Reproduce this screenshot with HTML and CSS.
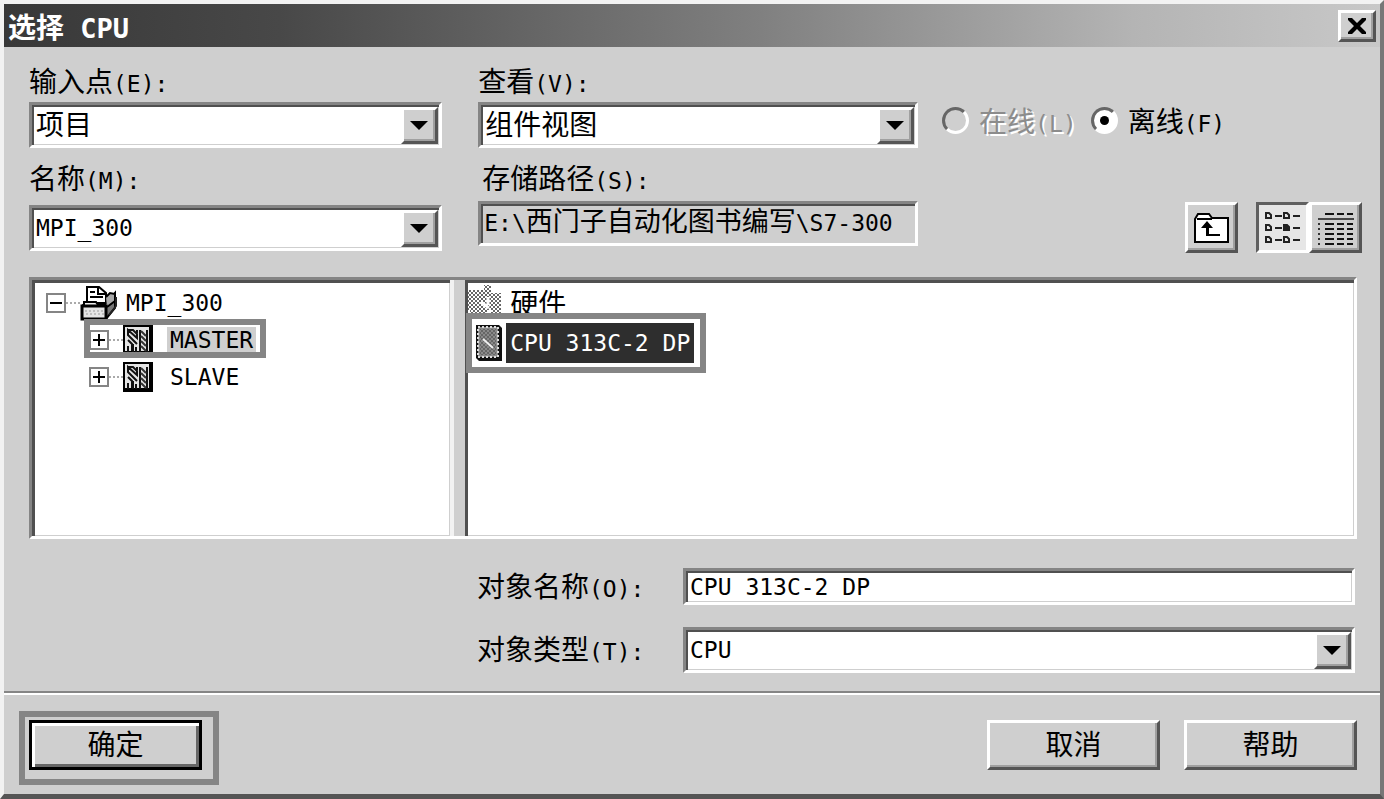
FILE: index.html
```html
<!DOCTYPE html>
<html lang="zh-CN">
<head>
    <meta charset="UTF-8">
    <meta name="viewport" content="width=device-width, initial-scale=1.0">
    <title>选择 CPU</title>
    <link rel="stylesheet" href="styles.css">
</head>
<body>

    <div class="dialog">
        <div class="titlebar">
            <h1>选择<span class="en"> CPU</span></h1>
            <button class="close-btn" type="button" aria-label="关闭">
                <svg width="20" height="18" viewBox="0 0 20 18"><path d="M1 1h4l5 5 5-5h4v2l-6 6 6 6v2h-4l-5-5-5 5H1v-2l6-6-6-6z"/></svg>
            </button>
        </div>

        <div class="top">
            <div class="col-entry">
                <label for="entry">输入点<span class="en">(E):</span></label>
                <div class="combo">
                    <select id="entry"><option>项目</option></select>
                    <span class="arrow"></span>
                </div>
                <label class="second" for="name">名称<span class="en">(M):</span></label>
                <div class="combo combo-name">
                    <select id="name" class="en"><option>MPI_300</option></select>
                    <span class="arrow"></span>
                </div>
            </div>

            <div class="col-view">
                <label for="view">查看<span class="en">(V):</span></label>
                <div class="combo">
                    <select id="view"><option>组件视图</option></select>
                    <span class="arrow"></span>
                </div>
                <label class="second indent" for="path">存储路径<span class="en">(S):</span></label>
                <output id="path" class="path"><span class="en">E:\</span>西门子自动化图书编写<span class="en">\S7-300</span></output>
            </div>

            <div class="col-mode">
                <div class="radios">
                    <input type="radio" name="mode" id="online" disabled>
                    <label for="online">在线<span class="en">(L)</span></label>
                    <input type="radio" name="mode" id="offline" checked>
                    <label for="offline">离线<span class="en">(F)</span></label>
                </div>
                <div class="toolbar">
                    <button type="button" class="tool tool-up" aria-label="上一级">
                        <svg width="36" height="32" viewBox="0 0 36 32">
                            <path d="M1 30V7l3-5h11l3 4h16v24z" fill="#fff" stroke="#000" stroke-width="2"/>
                            <path d="M3 7h15" stroke="#000" stroke-width="2"/>
                            <path d="M7 16l6-7 6 7h-4v6h11v2H12v-8z" fill="#000"/>
                        </svg>
                    </button>
                    <button type="button" class="tool pressed" aria-label="列表">
                        <svg width="36" height="32" viewBox="0 0 36 32">
                            <defs>
                                <g id="item">
                                    <path d="M1 1h3l2 2v3H1z" fill="none" stroke="#222" stroke-width="2"/>
                                    <path d="M10 4h7" stroke="#222" stroke-width="2"/>
                                </g>
                            </defs>
                            <use href="#item" x="0" y="0"/><use href="#item" x="18" y="0"/>
                            <use href="#item" x="0" y="12"/><use href="#item" x="18" y="12"/>
                            <use href="#item" x="0" y="24"/><use href="#item" x="18" y="24"/>
                            <path d="M19 13h4v5h-4z" fill="#222"/>
                        </svg>
                    </button>
                    <button type="button" class="tool" aria-label="详细资料">
                        <svg width="38" height="34" viewBox="0 0 38 34">
                            <path d="M1 8h36" stroke="#444" stroke-width="2"/>
                            <path d="M8 3h9m3 0h7m3 0h6M8 13h9m3 0h7m3 0h6M8 18h9m3 0h7m3 0h6M8 23h9m3 0h7m3 0h6M8 28h9m3 0h7m3 0h6M8 33h9m3 0h7m3 0h6" stroke="#111" stroke-width="2"/>
                            <path d="M2 12v22" stroke="#333" stroke-width="2" stroke-dasharray="2 3"/>
                        </svg>
                    </button>
                </div>
            </div>
        </div>

        <div class="panes">
            <ul class="tree en">
                <li>
                    <div class="node">
                        <svg class="toggle" width="20" height="20" viewBox="0 0 20 20"><path d="M1 1h18v18H1z" class="box"/><path d="M4 10h12" class="sign"/></svg>
                        <span class="dots"></span>
                        <svg class="project" width="38" height="36" viewBox="0 0 38 36">
                            <path d="M3 20l5-4h20l7-8v15L26 34H3z" fill="#777" stroke="#000" stroke-width="2"/>
                            <path d="M7 17V2h12l7 6v10H7z" fill="#fff" stroke="#000" stroke-width="2"/>
                            <path d="M18 2v7h8M10 7h5M10 12h13" fill="none" stroke="#000" stroke-width="2"/>
                            <path d="M26 12l4-4 5 1v7l-8 6" fill="#aaa" stroke="#000" stroke-width="2"/>
                            <path d="M4 21v-4h12l2 3h8" fill="#eee" stroke="#000" stroke-width="2"/>
                            <path d="M2 21h24v13H2z" fill="#e4e4e4" stroke="#000" stroke-width="3"/>
                            <path d="M5 26h19M6 29h18" stroke="#999" stroke-dasharray="2 2"/>
                            <path d="M29 30l7-9v-9" fill="none" stroke="#222" stroke-width="2"/>
                        </svg>
                        <span class="caption">MPI_300</span>
                    </div>
                    <ul>
                        <li>
                            <div class="node mark mark-node">
                                <svg class="toggle" width="20" height="20" viewBox="0 0 20 20"><path d="M1 1h18v18H1z" class="box"/><path d="M4 10h12M10 4v12" class="sign"/></svg>
                                <span class="dots"></span>
                                <svg width="30" height="30" viewBox="0 0 30 30">
                                    <g id="station">
                                        <path d="M1 1h28v28H1z" fill="#e4e4e4" stroke="#000" stroke-width="2"/>
                                        <path d="M28 1v27H1" fill="none" stroke="#000" stroke-width="4"/>
                                        <path d="M5 5h5l4 4v4L5 5v5l9 9M5 15l4 4v7M5 21v6M14 5v3M13 22v5M10 19v8M17 5v22M24 5v22" fill="none" stroke="#111" stroke-width="2"/>
                                        <path d="M18 6l5 5M18 11l5 5M18 16l5 5M18 21l5 5" stroke="#333" stroke-width="2"/>
                                    </g>
                                </svg>
                                <span class="caption current">MASTER</span>
                            </div>
                        </li>
                        <li>
                            <div class="node">
                                <svg class="toggle" width="20" height="20" viewBox="0 0 20 20"><path d="M1 1h18v18H1z" class="box"/><path d="M4 10h12M10 4v12" class="sign"/></svg>
                                <span class="dots"></span>
                                <svg width="30" height="30" viewBox="0 0 30 30"><use href="#station"/></svg>
                                <span class="caption">SLAVE</span>
                            </div>
                        </li>
                    </ul>
                </li>
            </ul>
            <div class="splitter"></div>
            <ul class="list">
                <li>
                    <svg width="36" height="36" viewBox="0 0 36 36">
                        <defs>
                            <pattern id="dither" width="4" height="4" patternUnits="userSpaceOnUse"><path d="M0 0h2v2H0zM2 2h2v2H2z" fill="#666"/></pattern>
                        </defs>
                        <path d="M1 6h16V1h7v8h10v25h-4v-5h-6v-5l-5 5H3v-3H1z" fill="url(#dither)"/>
                        <path d="M14 18l8 6M21 13v8" stroke="#fff" stroke-width="3"/>
                    </svg>
                    <span class="item">硬件</span>
                </li>
                <li class="chosen mark mark-item">
                    <svg width="28" height="38" viewBox="0 0 28 38">
                        <path d="M1 1h23l3 3v33H4l-3-3z" fill="#111"/>
                        <path d="M3 3h20v30H3z" fill="#8a8a8a" stroke="#ddd" stroke-width="2" stroke-dasharray="2 2"/>
                        <path d="M5 5h16v26H5z" fill="url(#dither)"/>
                        <path d="M8 15l10 9" stroke="#eee" stroke-width="2"/>
                    </svg>
                    <span class="item en">CPU 313C-2 DP</span>
                </li>
            </ul>
        </div>

        <div class="fields">
            <label for="objName">对象名称<span class="en">(O):</span></label>
            <input id="objName" class="en" type="text" value="CPU 313C-2 DP">
            <label for="objType">对象类型<span class="en">(T):</span></label>
            <div class="combo">
                <select id="objType" class="en"><option>CPU</option></select>
                <span class="arrow"></span>
            </div>
        </div>

        <div class="footer">
            <div class="mark mark-ok"><button type="button" class="btn default">确定</button></div>
            <button type="button" class="btn cancel">取消</button>
            <button type="button" class="btn">帮助</button>
        </div>
    </div>

</body>
</html>
```

FILE: styles.css
```css
* { margin: 0; padding: 0; box-sizing: border-box; }
body { background: #cfcfcf; color: #000; font-family: "Noto Sans CJK SC", sans-serif; font-size: 28px; line-height: 36px; }
button, select, input { font: inherit; color: inherit; border-radius: 0; outline: none; }
ul { list-style: none; }
svg { display: block; flex: none; }
.en { font-family: "DejaVu Sans Mono", monospace; font-size: 23px; }

.dialog {
    min-height: 100vh; display: flex; flex-direction: column;
    border: 4px solid; border-color: #f2f2f2 #777 #555 #f2f2f2; border-bottom-width: 5px;
}

/* title bar */
.titlebar {
    height: 43px; padding: 0 4px; display: flex; align-items: center; justify-content: space-between;
    background: linear-gradient(to right, #383838, #484848 20%, #808080 55%, #b4b4b4 82%, #c8c8c8);
}
.titlebar h1 { color: #fff; font-size: 28px; line-height: 36px; white-space: pre; }
.titlebar .en { font-size: 27px; line-height: 1; }
.close-btn { width: 38px; height: 32px; display: flex; align-items: center; justify-content: center; }
.close-btn, .tool, .btn, .arrow {
    background: #cfcfcf; border: 3px solid; border-color: #fff #555 #555 #fff;
    box-shadow: inset -2px -2px #a0a0a0;
}

/* combos and fields */
.combo, .path, .fields input {
    display: block; width: 100%; background: #fff;
    border: 3px solid; border-color: #858585 #fff #fff #858585;
    box-shadow: inset 2px 2px #505050, inset -1px -1px #cfcfcf;
}
.combo { position: relative; height: 46px; }
.combo select {
    appearance: none; display: block; width: 100%; height: 40px; padding: 0 0 4px 4px;
    background: transparent; border: none;
}
.combo select.en { padding-bottom: 0; }
.arrow { position: absolute; top: 2px; right: 1px; width: 37px; height: 37px; pointer-events: none; }
.arrow::after {
    content: ""; position: absolute; top: 11px; left: 6px;
    border: 9px solid transparent; border-top-color: #000; border-bottom: none;
}

.top { display: flex; padding: 15px 18px 0 25px; }
label { display: block; height: 36px; white-space: nowrap; }
.col-entry { width: 31%; padding-bottom: 2px; }
.col-view { width: 33%; margin-left: 36px; }
.col-entry .combo, .col-view .combo { margin-top: 4px; }
.top .second { margin-top: 11px; }
.top .indent { padding-left: 4px; }
.col-entry .combo-name { margin-top: 10px; }
.path { height: 45px; margin-top: 6px; padding-left: 3px; background: #cfcfcf; font-size: 27px; line-height: 32px; white-space: nowrap; overflow: hidden; }

.col-mode { flex: 1; display: flex; flex-direction: column; justify-content: space-between; margin-left: 24px; }
.radios { display: flex; align-items: center; padding-top: 40px; }
.radios input {
    appearance: none; width: 27px; height: 27px; margin-right: 10px; flex: none;
    border: 3px solid; border-color: #666 #fff #fff #666; border-radius: 50%;
}
.radios label + input { margin-left: 14px; }
.radios input:checked { background: #fff; }
.radios input:checked::after { content: ""; display: block; width: 9px; height: 9px; margin: 6px; background: #000; border-radius: 50%; }
.radios input:disabled + label { color: #8c8c8c; text-shadow: 2px 2px #fff; }

.toolbar { display: flex; justify-content: flex-end; }
.tool { width: 53px; height: 51px; display: flex; align-items: center; justify-content: center; }
.tool-up { margin-right: 18px; }
.pressed { background: #e6e6e6; border-color: #606060 #fff #fff #606060; box-shadow: none; }

/* tree and list */
.panes {
    flex: 1; display: grid; grid-template-columns: 8fr 15px 17fr; min-height: 180px;
    margin: 24px 23px 0 25px; border: 3px solid; border-color: #858585 #fff #fff #858585;
}
.tree, .list { background: #fff; box-shadow: inset 3px 3px #505050, inset -1px -1px #cfcfcf; }
.tree { padding: 4px 0 0 14px; }
.tree ul { padding-left: 43px; }
.splitter { background: #cfcfcf; border-left: 4px solid #f2f2f2; }
.list { padding: 2px 0 0 2px; }
.node { display: flex; align-items: center; height: 37px; }
.box { fill: #fff; stroke: #858585; stroke-width: 2px; }
.sign { stroke: #000; stroke-width: 2px; }
.dots { width: 14px; border-top: 2px dotted #aaa; }
.node .caption { margin-left: 14px; padding: 0 3px; line-height: 26px; }
.node .project + .caption { margin-left: 5px; }
.node .current { background: #cfcfcf; }

.list li { display: flex; align-items: center; height: 39px; }
.list .item { margin-left: 3px; padding: 0 4px; }
.list .chosen { padding-left: 8px; height: 44px; }
.chosen .item { background: #2e2e2e; color: #fff; line-height: 40px; }

/* highlight frames */
.mark { position: relative; width: max-content; }
.mark::after { content: ""; position: absolute; border: 6px solid #858585; pointer-events: none; }
.mark-node::after { inset: -2px -10px 0 -5px; }
.mark-item::after { inset: -8px -12px -8px -1px; }
.mark-ok::after { inset: -9px -17px -15px -10px; }

.fields {
    display: grid; grid-template-columns: 206px 1fr; row-gap: 22px; align-items: center;
    margin: 29px 25px 18px 473px;
}
.fields label { height: 40px; margin: -2px 0; }
.fields input { height: 37px; padding-left: 4px; }

.footer {
    display: flex; gap: 24px; padding: 27px 23px 24px 25px;
    border-top: 2px solid #858585; box-shadow: inset 0 2px #fff;
}
.btn { width: 173px; height: 50px; padding-bottom: 4px; }
.default { border-color: #000; box-shadow: inset 3px 3px #fff, inset -3px -3px #666; }
.cancel { margin-left: auto; }
```
